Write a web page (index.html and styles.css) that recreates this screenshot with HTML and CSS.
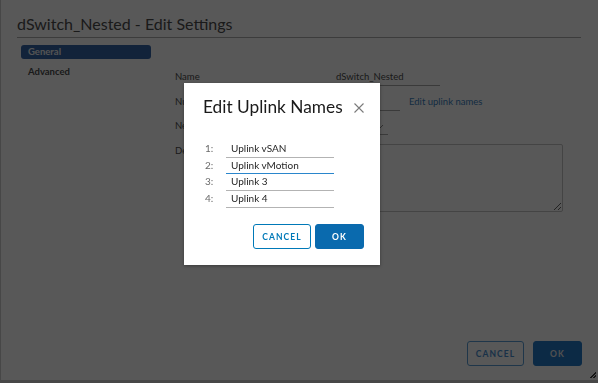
FILE: index.html
```html
<!DOCTYPE html>
<html lang="en">
<head>
<meta charset="utf-8">
<title>dSwitch_Nested - Edit Settings</title>
<link rel="stylesheet" href="styles.css">
</head>
<body>
<div class="dialog">
  <h1 class="dialog-title">dSwitch_Nested - Edit Settings</h1>
  <div class="dialog-body">
    <nav class="side-nav">
      <a class="nav-item active">General</a>
      <a class="nav-item">Advanced</a>
    </nav>
    <div class="form">
      <div class="form-row">
        <span class="form-label">Name</span>
        <span class="field field-name">dSwitch_Nested</span>
      </div>
      <div class="form-row">
        <span class="form-label">Number of uplinks</span>
        <span class="field field-short">4</span>
        <a class="link">Edit uplink names</a>
      </div>
      <div class="form-row">
        <span class="form-label">Network I/O Control</span>
        <span class="field field-select">Enabled
          <svg class="chevron" width="8" height="5" viewBox="0 0 8 5"><path d="M1 1l3 3 3-3" fill="none" stroke="#8a8a8a" stroke-width="1"/></svg>
        </span>
      </div>
      <div class="form-row form-row-tall">
        <span class="form-label">Description</span>
        <textarea class="textarea"></textarea>
      </div>
    </div>
  </div>
  <div class="dialog-footer">
    <button class="btn btn-outline">CANCEL</button>
    <button class="btn btn-primary">OK</button>
  </div>
  <span class="resize-grip"></span>
</div>

<div class="backdrop"></div>

<div class="modal">
  <div class="modal-header">
    <h2 class="modal-title">Edit Uplink Names</h2>
    <svg class="modal-close" width="10" height="10" viewBox="0 0 10 10"><path d="M0.5 0.5l9 9M9.5 0.5l-9 9" stroke="#7a7a7a" stroke-width="1.1" fill="none"/></svg>
  </div>
  <div class="uplinks">
    <div class="uplink-row"><span class="uplink-num">1:</span><span class="uplink-input">Uplink vSAN</span></div>
    <div class="uplink-row"><span class="uplink-num">2:</span><span class="uplink-input focused">Uplink vMotion</span></div>
    <div class="uplink-row"><span class="uplink-num">3:</span><span class="uplink-input">Uplink 3</span></div>
    <div class="uplink-row"><span class="uplink-num">4:</span><span class="uplink-input">Uplink 4</span></div>
  </div>
  <div class="modal-footer">
    <button class="mbtn mbtn-outline">CANCEL</button>
    <button class="mbtn mbtn-primary">OK</button>
  </div>
</div>
</body>
</html>
```

FILE: styles.css
```css
* { box-sizing: border-box; }

html, body {
  margin: 0;
  padding: 0;
  width: 598px;
  height: 383px;
  overflow: hidden;
}

body {
  background: #cfcfcf;
  font-family: Lato, "Open Sans", sans-serif;
  position: relative;
}

.dialog {
  position: relative;
  height: 381px;
  background: #ffffff;
  border-left: 1px solid #cdcdcd;
  border-bottom: 1px solid #cdcdcd;
  display: flex;
  flex-direction: column;
}

.dialog-title {
  margin: 0 17px 0 16px;
  padding: 14px 0 3px;
  font-size: 16px;
  line-height: 20px;
  font-weight: 400;
  color: #4d4d4d;
  border-bottom: 1px solid #aeaeae;
}

.dialog-body {
  flex: 1;
  display: flex;
}

.side-nav {
  width: 174px;
  flex: none;
  padding: 7px 0 0 20px;
  display: flex;
  flex-direction: column;
  gap: 6px;
}

.nav-item {
  display: block;
  width: 130px;
  height: 13.5px;
  line-height: 13.5px;
  padding-left: 7px;
  font-size: 9.5px;
  font-weight: 700;
  color: #4d4d4d;
  border-radius: 3px;
}

.nav-item.active {
  background: #3566a9;
  color: #f2f2f2;
}

.form {
  padding-top: 27px;
  display: flex;
  flex-direction: column;
}

.form-row {
  display: flex;
  align-items: flex-start;
  height: 24.7px;
}

.form-label {
  width: 161px;
  flex: none;
  padding-top: 4px;
  line-height: 16px;
  font-size: 9.5px;
  color: #4d4d4d;
}

.field {
  margin-top: 4px;
  height: 17px;
  line-height: 16px;
  font-size: 9.5px;
  color: #4d4d4d;
  border-bottom: 1px solid #a9a9a9;
}

.field-name { width: 104px; }
.field-short { width: 64px; }
.field-select {
  width: 52px;
  display: flex;
  justify-content: space-between;
  align-items: center;
  padding-right: 4px;
}

.link {
  margin: 4px 0 0 9px;
  line-height: 16px;
  font-size: 9.5px;
  color: #3a7fc0;
}

.form-row-tall { height: auto; }

.textarea {
  margin: 5px 0 0;
  width: 227px;
  height: 68px;
  border: 1px solid #c4c4c4;
  border-radius: 2px;
  resize: vertical;
  background: #ffffff;
  font-family: inherit;
}

.dialog-footer {
  display: flex;
  justify-content: flex-end;
  gap: 9px;
  padding: 0 16px 14px 0;
}

.btn {
  height: 25px;
  border-radius: 3px;
  font-family: inherit;
  font-size: 8.5px;
  font-weight: 700;
  letter-spacing: 1.1px;
  padding: 0;
}

.btn-outline {
  width: 57px;
  background: #ffffff;
  border: 1px solid #5a9ed6;
  color: #4a8ed0;
}

.btn-primary {
  width: 49px;
  background: #237ac8;
  border: 1px solid #237ac8;
  color: #e8e8e8;
}

.resize-grip {
  position: absolute;
  right: 2px;
  bottom: 2px;
  width: 6px;
  height: 6px;
  background: linear-gradient(135deg, transparent 0 45%, #444 45% 60%, transparent 60% 72%, #444 72% 88%, transparent 88%);
}

.backdrop {
  position: fixed;
  inset: 0;
  background: rgba(0, 0, 0, 0.655);
}

.modal {
  position: absolute;
  left: 184px;
  top: 83px;
  width: 196px;
  height: 182px;
  background: #ffffff;
  box-shadow: 0 1px 3px rgba(0, 0, 0, 0.35);
  padding: 14px 16px 16px 19px;
  display: flex;
  flex-direction: column;
}

.modal-header {
  display: flex;
  align-items: center;
  justify-content: space-between;
}

.modal-title {
  margin: 0;
  font-size: 17.3px;
  line-height: 20px;
  font-weight: 400;
  color: #1a1a1a;
}

.modal-close { margin-top: 2px; }

.uplinks {
  margin-top: 24px;
  padding-left: 2px;
  display: flex;
  flex-direction: column;
}

.uplink-row {
  display: flex;
  height: 16.67px;
}

.uplink-num {
  width: 21px;
  line-height: 15.5px;
  font-size: 10px;
  color: #6a6a6a;
}

.uplink-input {
  width: 108px;
  height: 16.67px;
  padding-left: 5px;
  line-height: 15.5px;
  font-size: 10px;
  color: #262626;
  border-bottom: 1px solid #b3b3b3;
}

.uplink-input.focused { border-bottom-color: #2a86cc; }

.modal-footer {
  margin-top: auto;
  display: flex;
  justify-content: flex-end;
  gap: 4px;
}

.mbtn {
  height: 25px;
  border-radius: 3px;
  font-family: inherit;
  font-size: 8.5px;
  font-weight: 700;
  letter-spacing: 1.1px;
  padding: 0;
}

.mbtn-outline {
  width: 58px;
  background: #ffffff;
  border: 1px solid #0079b8;
  color: #0079b8;
}

.mbtn-primary {
  width: 49px;
  background: #0a6aae;
  border: 1px solid #0a6aae;
  color: #ffffff;
}
```
